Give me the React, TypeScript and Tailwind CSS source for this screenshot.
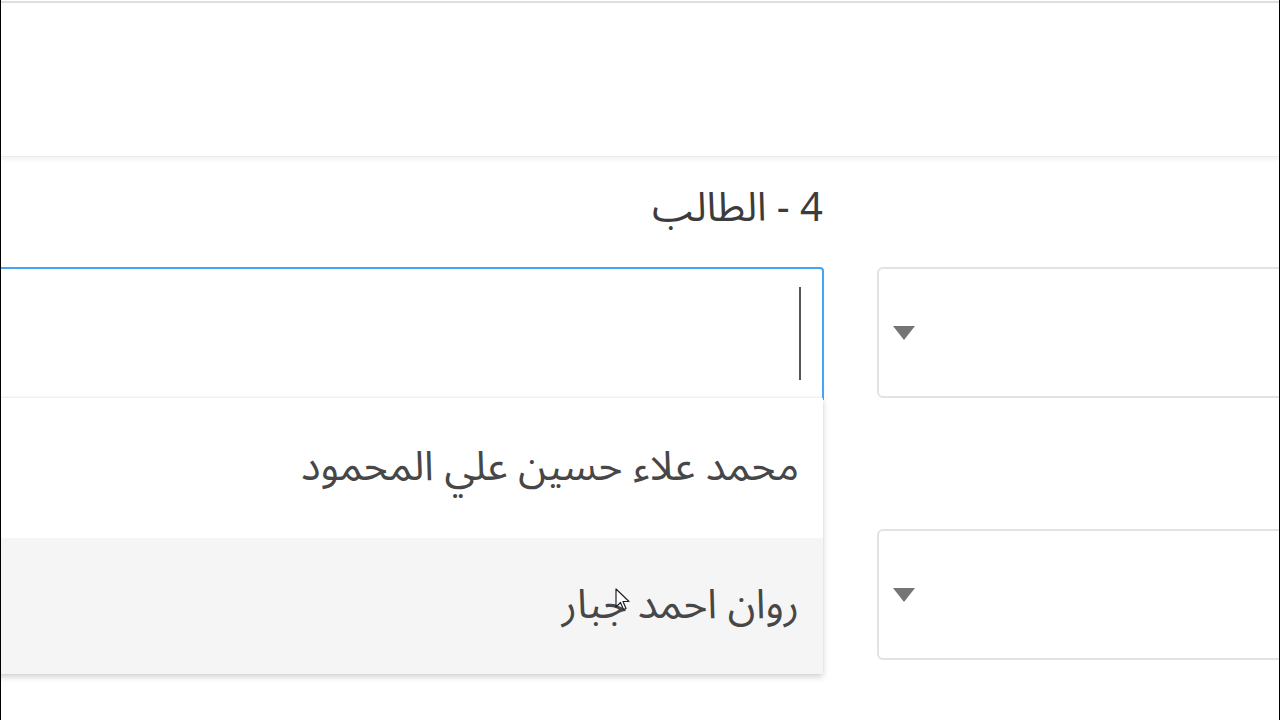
import React from "react";

const font = { fontFamily: '"Noto Sans Arabic", "DejaVu Sans", "Noto Sans", sans-serif' };

function Caret() {
  return (
    <svg width="22" height="14" viewBox="0 0 22 14" className="block">
      <path d="M0 0 H22 L11 14 Z" fill="#757575" />
    </svg>
  );
}

function SelectBox() {
  return (
    <div className="h-[131px] border-2 border-[#e2e2e2] rounded-[6px] flex items-center pl-[14px] bg-white">
      <Caret />
    </div>
  );
}

const students = ["محمد علاء حسين علي المحمود", "روان احمد جبار"];

export default function App() {
  return (
    <div className="w-[1280px] h-[720px] bg-white border-x border-black overflow-hidden text-[#444]" style={font}>
      <div className="h-[156px] border-t-2 border-[#dedede] mt-[1px] border-b border-b-[#ececec] shadow-[0_3px_4px_rgba(0,0,0,0.05)]" />

      <div className="flex ml-[-20px] pt-[24px]">
        <div className="w-[843px] shrink-0">
          <h2 dir="rtl" className="text-right text-[40px] leading-[56px] pr-[1px] h-[86px] text-[#3c3c3c]">4 - الطالب</h2>

          <div className="relative">
            <div className="h-[133px] border-2 border-[#42a5f5] rounded-tr-[4px] flex justify-end items-center pr-[21px]">
              <div className="w-[2px] h-[93px] bg-[#555]" />
            </div>

            <div dir="rtl" className="absolute left-0 right-[1px] top-[131px] bg-white shadow-[0_3px_6px_rgba(0,0,0,0.18),0_-1px_2px_rgba(0,0,0,0.06)] z-10">
              {students.map((s, i) => (
                <div
                  key={s}
                  className={`flex items-center pr-[24px] text-[41px] text-[#474747] ${i === 0 ? "h-[140px] bg-white" : "h-[136px] bg-[#f5f5f5] relative"}`}
                >
                  {s}
                  {i === 1 && (
                    <svg width="16" height="24" viewBox="0 0 16 24" className="absolute left-[634px] top-[50px]">
                      <path d="M1 1 L1 19 L5.5 14.5 L8.5 21.5 L11 20.5 L8 13.5 L14 13.5 Z" fill="#fff" stroke="#222" strokeWidth="1.2" strokeLinejoin="round" />
                    </svg>
                  )}
                </div>
              ))}
            </div>
          </div>
        </div>

        <div className="w-[430px] shrink-0 ml-[53px] pt-[86px] flex flex-col gap-[131px]">
          <SelectBox />
          <SelectBox />
        </div>
      </div>
    </div>
  );
}
